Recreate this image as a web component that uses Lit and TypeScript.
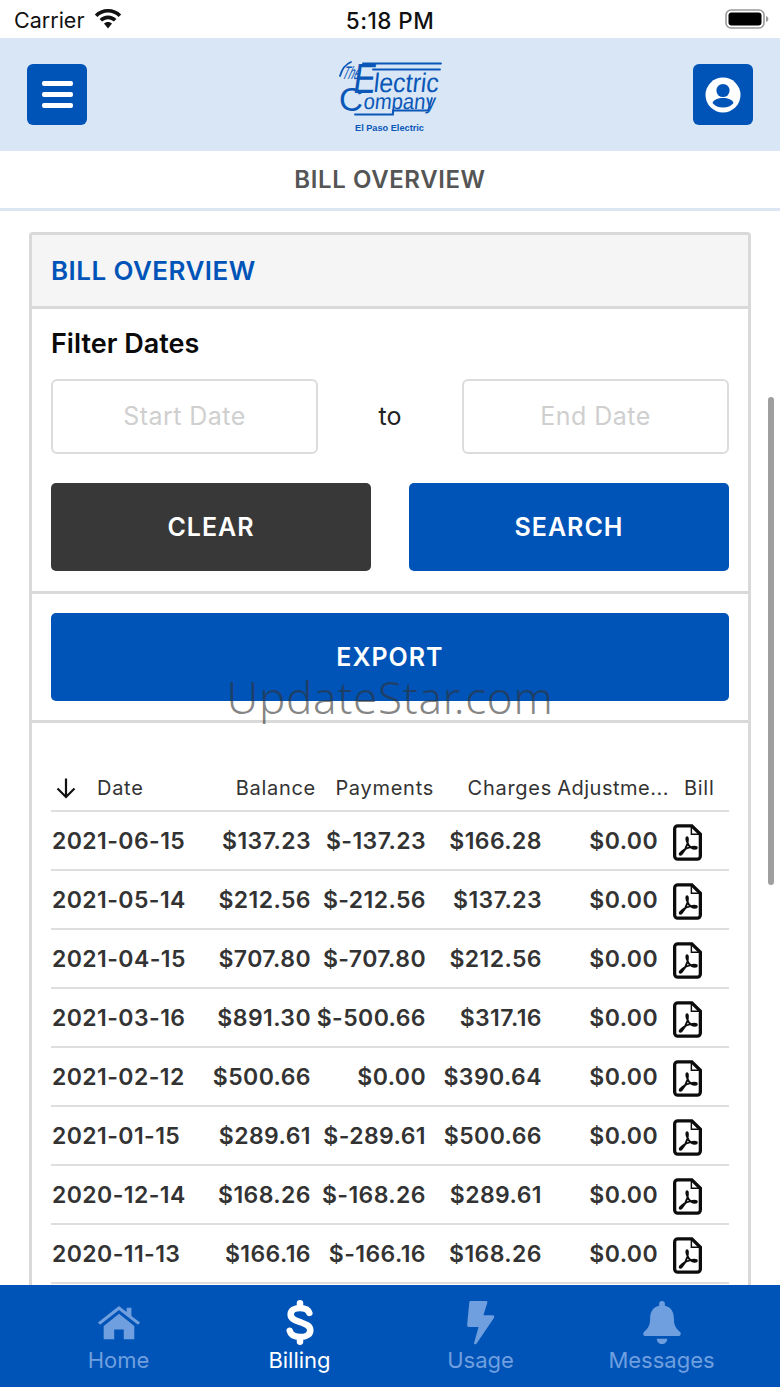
import { LitElement, html, css, svg } from "lit";
import { customElement } from "lit/decorators.js";

const rows = [
  ["2021-06-15", "$137.23", "$-137.23", "$166.28", "$0.00"],
  ["2021-05-14", "$212.56", "$-212.56", "$137.23", "$0.00"],
  ["2021-04-15", "$707.80", "$-707.80", "$212.56", "$0.00"],
  ["2021-03-16", "$891.30", "$-500.66", "$317.16", "$0.00"],
  ["2021-02-12", "$500.66", "$0.00", "$390.64", "$0.00"],
  ["2021-01-15", "$289.61", "$-289.61", "$500.66", "$0.00"],
  ["2020-12-14", "$168.26", "$-168.26", "$289.61", "$0.00"],
  ["2020-11-13", "$166.16", "$-166.16", "$168.26", "$0.00"],
];

const pdf = html`<svg class="pdf" width="29" height="37" viewBox="0 0 30 38" fill="none">
  <path d="M5 1.700H19.500L28.300 10.500V33A3.300 3.300 0 0 1 25 36.300H5A3.300 3.300 0 0 1 1.700 33V5A3.300 3.300 0 0 1 5 1.700Z" stroke="#0c0c0c" stroke-width="3.400"/>
  <path d="M19 3V10.500H27" stroke="#0c0c0c" stroke-width="1.500"/>
  <path d="M14.600 13.500C13.600 13.500 13.600 15.500 14.400 18C15.200 20.600 17 23.200 19.300 24.600C21 25.600 24.600 25.800 24.600 24.400C24.600 23 20.600 23.300 17.400 24C13.800 24.800 9.400 27.600 7.400 30C6.200 31.600 7.600 32.400 9 31C11.400 28.600 13.600 24.600 14.800 20.600C15.400 18.400 15.800 13.500 14.600 13.500Z" stroke="#0c0c0c" stroke-width="2" stroke-linejoin="round"/>
</svg>`;

const logo = svg`<svg class="logo" width="106" height="84" viewBox="0 -4 106 84">
  <g fill="none" stroke="#0b57b8" stroke-width="1.800" stroke-linecap="round">
    <path d="M26 6.500H104"/>
    <path d="M36 12.500H103"/>
    <path d="M18 57.500H56V53.500H91L95 41"/>
    <path d="M3 19C5 12 9 7 14 5"/>
  </g>
  <g fill="#0b57b8">
    <text transform="translate(4 22) skewX(-24)" class="lt" font-size="18" textLength="17" lengthAdjust="spacingAndGlyphs">The</text>
    <text transform="translate(15 35.500) skewX(-8)" class="lt" font-size="42" textLength="22" lengthAdjust="spacingAndGlyphs">E</text>
    <text transform="translate(36 34.500) skewX(-6)" class="lt" font-size="27" textLength="65" lengthAdjust="spacingAndGlyphs">lectric</text>
    <text x="2" y="53.500" class="lt" font-size="33" textLength="24" lengthAdjust="spacingAndGlyphs">C</text>
    <text transform="translate(26 51.500) skewX(-6)" class="lt" font-size="22" textLength="72" lengthAdjust="spacingAndGlyphs">ompany</text>
    <text x="18" y="74" class="cap" font-size="9.200">El Paso Electric</text>
  </g>
</svg>`;

const home = html`<svg width="44" height="35" viewBox="0 0 46 40" preserveAspectRatio="none" fill="currentColor">
  <path d="M1 20L23 1L31 8V3H36V12.500L45 20L42.800 22.600L23 5.600L3.200 22.600Z"/>
  <path d="M7 24L23 10L39 24V39H28V28H18V39H7Z"/>
</svg>`;
const dollar = html`<svg width="28" height="45" viewBox="0 0 30 50" preserveAspectRatio="none" fill="none" stroke="currentColor" stroke-linecap="round">
  <path d="M25 14.500C24 10.500 20 9 15 9C9 9 5 11.500 5 16C5 21 10 22.600 15 24.500C20.500 26.600 26 28 26 33.500C26 38.400 21.500 41 15.500 41C9.500 41 5 39 4 34" stroke-width="7"/>
  <path d="M15 3.500V8M15 42V46.500" stroke-width="7"/>
</svg>`;
const bolt = html`<svg width="29" height="45" viewBox="0 0 30 50" preserveAspectRatio="none" fill="currentColor">
  <path d="M5 1H21C22 1 22.400 2 22 3L18 17H27.500C29 17 29.600 18.400 29 19.600L11 48.400C10 50 8 49.200 8.400 47.400L13 30H3.500C2 30 1 29 1.200 27.400L3.400 2.500C3.500 1.600 4 1 5 1Z"/>
</svg>`;
const bell = html`<svg width="40" height="45" viewBox="0 0 42 50" preserveAspectRatio="none" fill="currentColor">
  <path d="M21 1C22.800 1 24 2.200 24 4V6.500C31 8 33.500 14 33.500 21C33.500 29 36 31.500 40 35.500C41.500 37.500 40.600 40 38 40H4C1.400 40 .5 37.500 2 35.500C6 31.500 8.500 29 8.500 21C8.500 14 11 8 18 6.500V4C18 2.200 19.200 1 21 1Z"/>
  <path d="M15.500 43H26.500C26.500 46.400 24 49 21 49C18 49 15.500 46.400 15.500 43Z"/>
</svg>`;

@customElement("app-root")
export class AppRoot extends LitElement {
  static styles = css`
    :host {
      display: block;
      width: 780px;
      height: 1387px;
      font-family: Inter, "Liberation Sans", sans-serif;
      background: #fff;
      overflow: hidden;
    }
    .app { position: relative; display: flex; flex-direction: column; height: 1387px; }
    .status {
      height: 38px; flex: none; display: grid; grid-template-columns: 1fr auto 1fr;
      align-items: center; padding: 2px 11px 0 14px; font-size: 21.500px; color: #111; box-sizing: border-box;
    }
    .carrier { display: flex; align-items: center; gap: 10px; font-weight: 400; }
    .carrier svg { margin-top: -3px; }
    .time { font-weight: 500; font-size: 22.500px; letter-spacing: .45px; margin-left: -3px; }
    .battery { justify-self: end; display: flex; align-items: center; margin-top: -2px; }
    .head {
      height: 113px; flex: none; background: #d8e6f5; display: flex; align-items: center;
      justify-content: space-between; padding: 0 27px; box-sizing: border-box;
    }
    .sq {
      width: 60px; height: 61px; background: #0054b8; border-radius: 6px; display: flex;
      align-items: center; justify-content: center; flex: none;
    }
    .burger { display: flex; flex-direction: column; gap: 6px; width: 31px; }
    .burger i { display: block; height: 5px; background: #fff; border-radius: 2px; }
    .logo { display: block; }
    .logo .lt { font-family: "Liberation Sans", sans-serif; font-weight: 400; }
    .logo .cap { font-family: "Liberation Sans", sans-serif; font-weight: 700; }
    .title {
      height: 60px; flex: none; box-sizing: border-box; border-bottom: 3px solid #dbe6f2;
      display: flex; align-items: center; justify-content: center; font-size: 24px;
      font-weight: 600; color: #555; letter-spacing: .6px;
    }
    .scroll { flex: 1; min-height: 0; overflow: hidden; padding: 21px 29px 0; }
    .card { border: 3px solid #d9d9d9; border-bottom: 0; border-radius: 4px 4px 0 0; padding-bottom: 30px; }
    .cardhead {
      height: 71px; box-sizing: border-box; background: #f5f5f5; display: flex; align-items: center;
      padding-left: 19px; font-size: 26px; font-weight: 600; color: #0054b8; letter-spacing: .45px;
    }
    .sec { border-top: 3px solid #d9d9d9; padding: 19px; }
    .filter { padding-top: 20px; padding-bottom: 20px; }
    .ftitle { font-size: 27px; line-height: 30px; font-weight: 600; color: #0a0a0a; }
    .dates { display: grid; grid-template-columns: 267px 1fr 267px; margin-top: 20px; align-items: center; }
    .input {
      height: 75px; box-sizing: border-box; border: 2px solid #dcdcdc; border-radius: 6px;
      display: flex; align-items: center; justify-content: center; color: #cfcfcf; font-size: 25px;
      letter-spacing: .45px; padding-bottom: 1px;
    }
    .to { text-align: center; font-size: 25px; color: #222; padding-bottom: 1px; }
    .btns { display: grid; grid-template-columns: 320px 320px; justify-content: space-between; margin-top: 29px; }
    .btn {
      height: 88px; border-radius: 5px; color: #fff; background: #0054b8; display: flex;
      align-items: center; justify-content: center; font-size: 25px; font-weight: 600; letter-spacing: 1px;
    }
    .btn.dark { background: #383838; }
    .tablesec { padding-top: 40px; padding-bottom: 0; }
    .r {
      display: grid; grid-template-columns: 140px 124px 118px 118px 117px 61px;
      align-items: center; height: 59px; box-sizing: border-box; border-bottom: 2px solid #dedede;
      font-size: 23px; font-weight: 600; color: #333; letter-spacing: .42px;
    }
    .r > div { text-align: right; white-space: nowrap; }
    .r > .d { text-align: left; padding-left: 1px; }
    .r > .b { padding-right: 4px; }
    .r > .p { padding-right: 7px; }
    .r > .c { padding-right: 9px; }
    .r > .a { padding-right: 10px; }
    .r > .bill { text-align: left; padding-left: 5px; display: flex; padding-top: 4px; }
    .hr { height: 49px; font-size: 20px; font-weight: 400; color: #333; letter-spacing: .72px; padding-top: 2px; }
    .hr > div { padding-right: 0 !important; }
    .hr > .d { display: flex; align-items: center; gap: 20px; padding-left: 4px; }
    .hr > .b, .hr > .p, .hr > .c { margin-right: -1px; }
    .hr > .a { letter-spacing: .5px; margin-right: -1px; }
    .hr > .bill { padding-left: 16px; padding-top: 0; }
    .tabs {
      height: 102px; flex: none; background: #0054b8; display: grid; grid-template-columns: repeat(4, 181px);
      justify-content: center; color: #6f9fdf; box-sizing: border-box; padding-top: 15px;
    }
    .tab { display: flex; flex-direction: column; align-items: center; font-size: 22px; }
    .tab .ic { height: 45px; display: flex; align-items: center; justify-content: center; }
    .tab span { margin-top: 2px; line-height: 26px; }
    .tab.on { color: #fff; }
    .thumb { position: absolute; left: 768px; top: 397px; width: 6px; height: 488px; background: #9f9f9f; border-radius: 3px; }
    .wm {
      position: absolute; left: 0; right: 0; top: 668px; text-align: center; font-family: "Noto Sans", sans-serif;
      font-size: 44px; line-height: 58px; font-weight: 300; color: rgba(50, 50, 50, .6); letter-spacing: .7px;
    }
  `;

  render() {
    return html`<div class="app">
      <div class="status">
        <div class="carrier">Carrier
          <svg width="28" height="20" viewBox="0 0 28 20" fill="#111">
            <path d="M14 0C8.800 0 4.200 2 .8 5.400L3.400 8C6.200 5.200 9.900 3.600 14 3.600S21.800 5.200 24.600 8L27.200 5.400C23.800 2 19.200 0 14 0Z"/>
            <path d="M14 6.600C10.700 6.600 7.700 7.900 5.600 10.100L8.100 12.600C9.600 11.100 11.700 10.200 14 10.200S18.400 11.100 19.900 12.600L22.400 10.100C20.300 7.900 17.300 6.600 14 6.600Z"/>
            <path d="M14 13C12.400 13 11 13.600 10 14.600L14 19.600L18 14.600C17 13.600 15.600 13 14 13Z"/>
          </svg>
        </div>
        <div class="time">5:18 PM</div>
        <div class="battery">
          <svg width="44" height="20" viewBox="0 0 44 20">
            <rect x="1" y="1" width="38" height="18" rx="5" fill="none" stroke="#999" stroke-width="1.600"/>
            <rect x="3.500" y="3.500" width="33" height="13" rx="3" fill="#000"/>
            <path d="M41 7C42.500 7.500 43.400 8.600 43.400 10S42.500 12.500 41 13Z" fill="#999"/>
          </svg>
        </div>
      </div>
      <div class="head">
        <div class="sq"><div class="burger"><i></i><i></i><i></i></div></div>
        ${logo}
        <div class="sq">
          <svg width="36" height="36" viewBox="0 0 36 36">
            <circle cx="18" cy="18" r="17.500" fill="#fff"/>
            <circle cx="18" cy="13.500" r="6.600" fill="#0054b8"/>
            <path d="M7.500 26C8.500 22.500 13 21 18 21S27.500 22.500 28.500 26C26 29 22.500 30.500 18 30.500S10 29 7.500 26Z" fill="#0054b8"/>
          </svg>
        </div>
      </div>
      <div class="title">BILL OVERVIEW</div>
      <div class="scroll">
        <div class="card">
          <div class="cardhead">BILL OVERVIEW</div>
          <div class="sec filter">
            <div class="ftitle">Filter Dates</div>
            <div class="dates">
              <div class="input">Start Date</div>
              <div class="to">to</div>
              <div class="input">End Date</div>
            </div>
            <div class="btns">
              <div class="btn dark">CLEAR</div>
              <div class="btn">SEARCH</div>
            </div>
          </div>
          <div class="sec"><div class="btn">EXPORT</div></div>
          <div class="sec tablesec">
            <div class="r hr">
              <div class="d">
                <svg width="22" height="22" viewBox="0 0 22 22" fill="none" stroke="#111" stroke-width="2.200">
                  <path d="M11 1.500V20M2.500 11.500L11 20L19.500 11.500"/>
                </svg>
                Date
              </div>
              <div class="b">Balance</div>
              <div class="p">Payments</div>
              <div class="c">Charges</div>
              <div class="a">Adjustme...</div>
              <div class="bill">Bill</div>
            </div>
            ${rows.map(
              (r) => html`<div class="r">
                <div class="d">${r[0]}</div>
                <div class="b">${r[1]}</div>
                <div class="p">${r[2]}</div>
                <div class="c">${r[3]}</div>
                <div class="a">${r[4]}</div>
                <div class="bill">${pdf}</div>
              </div>`
            )}
          </div>
        </div>
      </div>
      <div class="tabs">
        <div class="tab"><div class="ic">${home}</div><span>Home</span></div>
        <div class="tab on"><div class="ic">${dollar}</div><span>Billing</span></div>
        <div class="tab"><div class="ic">${bolt}</div><span>Usage</span></div>
        <div class="tab"><div class="ic">${bell}</div><span>Messages</span></div>
      </div>
      <div class="thumb"></div>
      <div class="wm">UpdateStar.com</div>
    </div>`;
  }
}
